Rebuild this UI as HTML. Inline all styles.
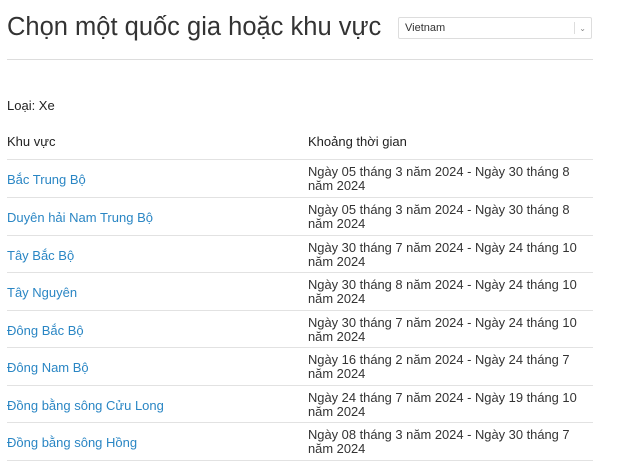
<!DOCTYPE html>
<html><head><meta charset="utf-8"><style>
body{margin:0;background:#fff;font-family:"Liberation Sans",sans-serif;color:#222;width:640px;height:474px;overflow:hidden;position:relative}
h1{position:absolute;left:7px;top:13px;margin:0;font-weight:normal;font-size:25.5px;color:#333}
.sel{position:absolute;left:398px;top:17px;width:194px;height:22px;border:1px solid #ddd;border-radius:2px;font-size:11px;line-height:21px;box-sizing:border-box;padding-left:6px;color:#333}
.sel .s{position:absolute;right:16px;top:4px;height:12px;border-left:1px solid #ddd}
.sel .a{position:absolute;right:5px;top:0;font-size:8px;color:#888}
.hr{position:absolute;left:7px;width:586px;top:59px;border-top:1px solid #ddd}
.t{position:absolute;font-size:13px}
.row{position:absolute;left:7px;width:586px;border-top:1px solid #e2e2e2;height:37px}
.row a{position:absolute;left:0;top:12px;color:#2a86c4;text-decoration:none;font-size:13px}
.row div{position:absolute;left:301px;top:5px;font-size:12.9px;line-height:14px;color:#333}
</style></head><body>
<h1>Chọn một quốc gia hoặc khu vực</h1>
<div class="sel">Vietnam<span class="s"></span><span class="a">⌄</span></div>
<div class="hr"></div>
<div class="t" style="left:7px;top:98px">Loại: Xe</div>
<div class="t" style="left:7px;top:134px">Khu vực</div>
<div class="t" style="left:308px;top:134px">Khoảng thời gian</div>
<div class="row" style="top:159px"><a>Bắc Trung Bộ</a><div>Ngày 05 tháng 3 năm 2024 - Ngày 30 tháng 8<br>năm 2024</div></div>
<div class="row" style="top:197px"><a>Duyên hải Nam Trung Bộ</a><div>Ngày 05 tháng 3 năm 2024 - Ngày 30 tháng 8<br>năm 2024</div></div>
<div class="row" style="top:235px"><a>Tây Bắc Bộ</a><div>Ngày 30 tháng 7 năm 2024 - Ngày 24 tháng 10<br>năm 2024</div></div>
<div class="row" style="top:272px"><a>Tây Nguyên</a><div>Ngày 30 tháng 8 năm 2024 - Ngày 24 tháng 10<br>năm 2024</div></div>
<div class="row" style="top:310px"><a>Đông Bắc Bộ</a><div>Ngày 30 tháng 7 năm 2024 - Ngày 24 tháng 10<br>năm 2024</div></div>
<div class="row" style="top:347px"><a>Đông Nam Bộ</a><div>Ngày 16 tháng 2 năm 2024 - Ngày 24 tháng 7<br>năm 2024</div></div>
<div class="row" style="top:385px"><a>Đồng bằng sông Cửu Long</a><div>Ngày 24 tháng 7 năm 2024 - Ngày 19 tháng 10<br>năm 2024</div></div>
<div class="row" style="top:422px"><a>Đồng bằng sông Hồng</a><div>Ngày 08 tháng 3 năm 2024 - Ngày 30 tháng 7<br>năm 2024</div></div>
<div class="row" style="top:460px;height:1px"></div>
</body></html>
